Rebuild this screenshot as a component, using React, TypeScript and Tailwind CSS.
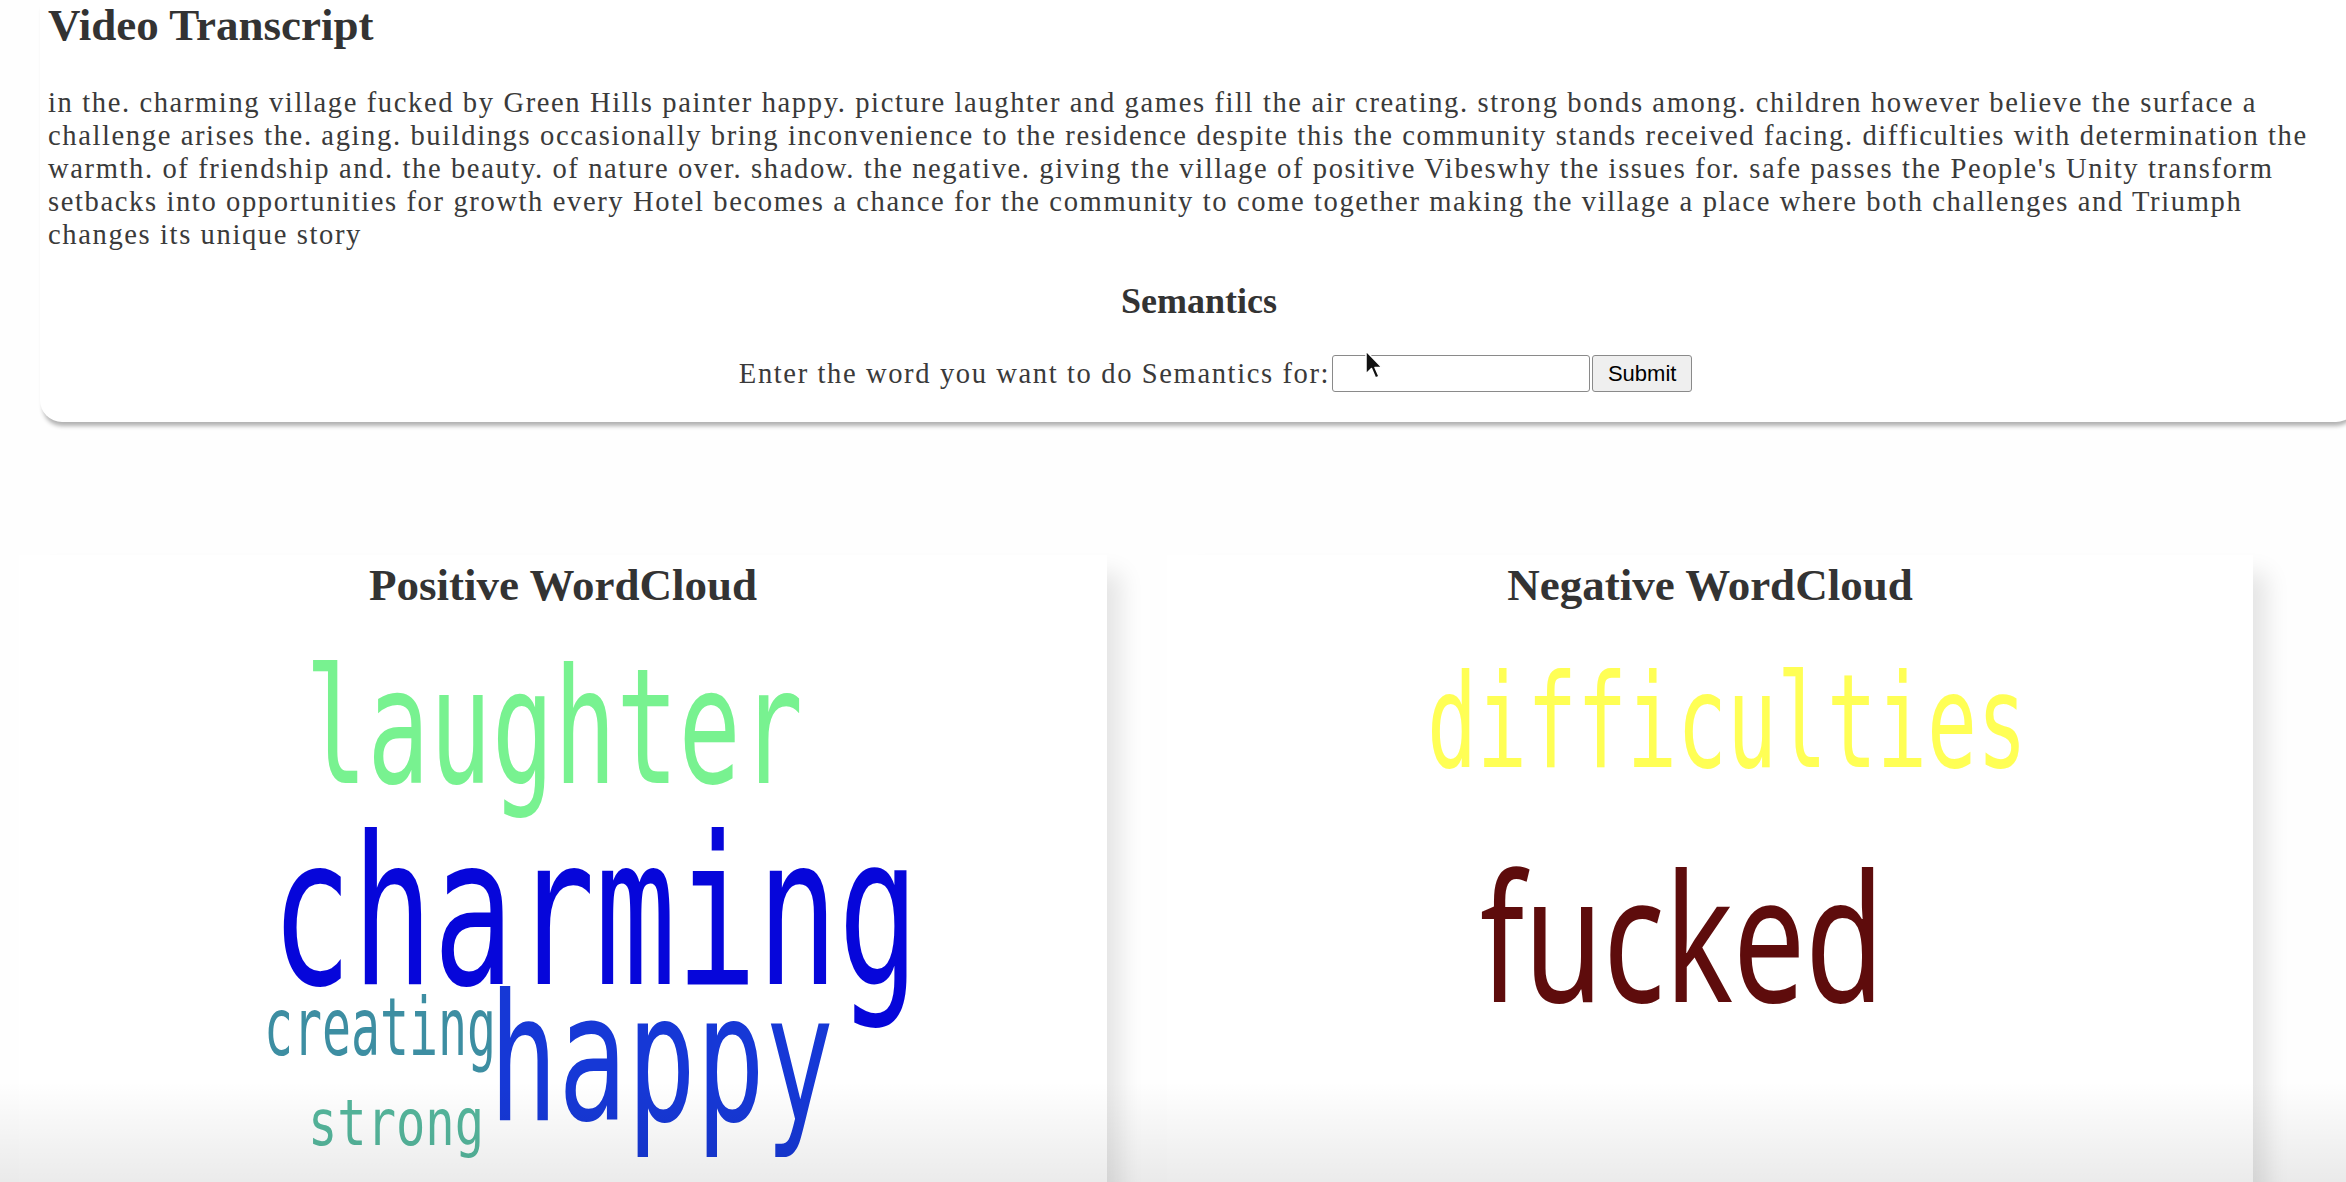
import React, { useState } from "react"

const transcript =
	"in the. charming village fucked by Green Hills painter happy. picture laughter and games fill the air creating. strong bonds among. children however believe the surface a challenge arises the. aging. buildings occasionally bring inconvenience to the residence despite this the community stands received facing. difficulties with determination the warmth. of friendship and. the beauty. of nature over. shadow. the negative. giving the village of positive Vibeswhy the issues for. safe passes the People's Unity transform setbacks into opportunities for growth every Hotel becomes a chance for the community to come together making the village a place where both challenges and Triumph changes its unique story"

type Word = {
	text: string,
	x: number,
	y: number,
	size: number,
	length: number,
	color: string,
	font: string,
}

const mono = "'DejaVu Sans Mono', 'Liberation Mono', monospace"
const sans = "'Noto Sans', 'DejaVu Sans', sans-serif"

// word positions are in page coordinates, the svg viewBox is offset to the card
const positiveWords: Word[] = [
	{ text: "laughter", x: 305, y: 783, size: 160, length: 498, color: "#78f290", font: mono },
	{ text: "charming", x: 271, y: 984, size: 206, length: 648, color: "#0606da", font: mono },
	{ text: "creating", x: 264, y: 1055, size: 80, length: 232, color: "#3d8ea2", font: mono },
	{ text: "happy", x: 489, y: 1120, size: 176, length: 345, color: "#1638d6", font: mono },
	{ text: "strong", x: 308, y: 1145, size: 64, length: 176, color: "#55b69c", font: mono },
]

const negativeWords: Word[] = [
	{ text: "difficulties", x: 1427, y: 767, size: 130, length: 600, color: "#ffff55", font: mono },
	{ text: "fucked", x: 1480, y: 1002, size: 178, length: 404, color: "#5e0c0c", font: sans },
]

function WordCloud({ words, left }: { words: Word[], left: number }) {
	return (
		<svg
			className="block"
			width={1086}
			height={571}
			viewBox={`${left} 611 1086 571`}
		>
			{words.map((w) => (
				<text
					key={w.text}
					x={w.x}
					y={w.y}
					fontSize={w.size}
					fill={w.color}
					fontFamily={w.font}
					textLength={w.length}
					lengthAdjust="spacingAndGlyphs"
				>
					{w.text}
				</text>
			))}
		</svg>
	)
}

function App() {
	const [word, setWord] = useState("")

	return (
		<div className="relative h-[1182px] w-full overflow-hidden bg-[#fefefe] font-['Liberation_Serif',serif]">
			{/* transcript card */}
			<div className="ml-[40px] w-[2318px] rounded-b-[22px] bg-white px-[8px] pb-[30px] shadow-[0_7px_4px_-3px_rgba(0,0,0,0.3)]">
				<h2 className="-mt-[1px] text-[45px] font-bold leading-[52px] text-[#333]">
					Video Transcript
				</h2>
				<p className="mt-[35px] text-[28.6px] leading-[33px] tracking-[1.6px] text-[#3a3a3a]">
					{transcript}
				</p>
				<h3 className="mt-[30px] text-center text-[36px] font-bold leading-[41px] text-[#333]">
					Semantics
				</h3>
				<div className="mt-[33px] flex h-[37px] items-center justify-center pl-[33px]">
					<label
						htmlFor="semantic-word"
						className="text-[28.6px] leading-[33px] tracking-[1.6px] text-[#3a3a3a]"
					>
						Enter the word you want to do Semantics for:
					</label>
					<input
						id="semantic-word"
						type="text"
						value={word}
						onChange={(e) => setWord(e.target.value)}
						className="ml-[2px] h-[37px] w-[258px] rounded-[3px] border border-[#8a8a8a] bg-white px-2 text-[22px]"
					/>
					<button className="ml-[2px] h-[37px] w-[100px] rounded-[3px] border border-[#8a8a8a] bg-[#efefef] font-['Liberation_Sans',sans-serif] text-[22px] text-black">
						Submit
					</button>
				</div>
			</div>

			{/* word clouds */}
			<div className="mt-[133px] flex gap-[60px] pl-[19px]">
				<div className="h-[700px] w-[1088px] shrink-0 bg-white pt-[4px] shadow-[20px_12px_22px_-6px_rgba(0,0,0,0.1)]">
					<h2 className="text-center text-[45px] font-bold leading-[52px] text-[#333]">
						Positive WordCloud
					</h2>
					<WordCloud words={positiveWords} left={19} />
				</div>
				<div className="h-[700px] w-[1086px] shrink-0 bg-white pt-[4px] shadow-[20px_12px_22px_-6px_rgba(0,0,0,0.1)]">
					<h2 className="text-center text-[45px] font-bold leading-[52px] text-[#333]">
						Negative WordCloud
					</h2>
					<WordCloud words={negativeWords} left={1167} />
				</div>
			</div>

			{/* mouse pointer over the input */}
			<svg
				className="absolute left-[1364px] top-[350px]"
				width="20"
				height="30"
				viewBox="0 0 20 30"
			>
				<path
					d="M2 1 L2 24 L7.5 18.5 L11.5 28 L15 26.5 L11 17.5 L18 17.5 Z"
					fill="#111"
					stroke="#fff"
					strokeWidth="1.5"
					strokeLinejoin="round"
				/>
			</svg>

			{/* darkening at the bottom of the frame */}
			<div className="pointer-events-none absolute inset-x-0 bottom-0 h-[100px] bg-gradient-to-b from-transparent to-black/[0.08]"></div>
		</div>
	)
}

export default App
